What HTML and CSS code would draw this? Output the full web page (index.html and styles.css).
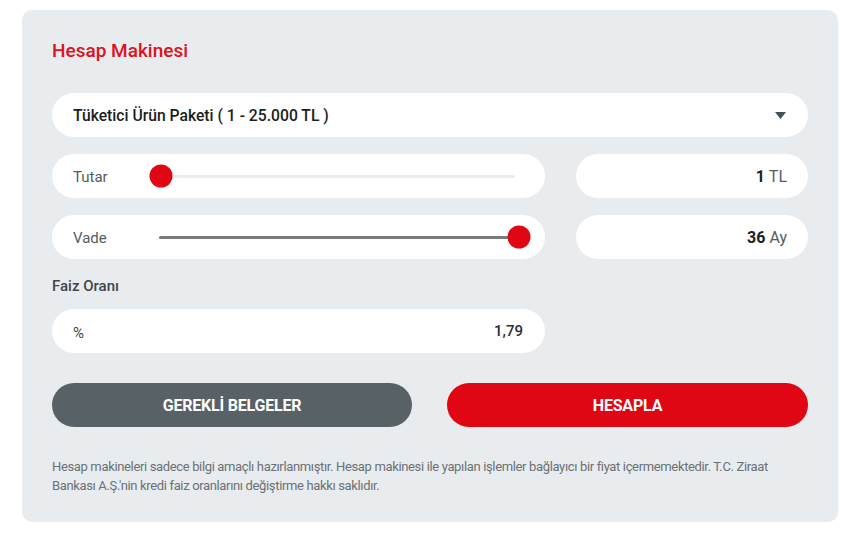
FILE: index.html
```html
<!DOCTYPE html>
<html lang="tr">
<head>
<meta charset="utf-8">
<title>Hesap Makinesi</title>
<link rel="stylesheet" href="styles.css">
</head>
<body>
<div class="card">
  <h2 class="title">Hesap Makinesi</h2>
  <div class="select">
    <span>Tüketici Ürün Paketi ( 1 - 25.000 TL )</span>
    <svg class="caret" width="11" height="7" viewBox="0 0 11 7"><path d="M0 0H11L5.5 7Z" fill="#454f55"/></svg>
  </div>
  <div class="row">
    <div class="field slider-field">
      <span class="label">Tutar</span>
      <div class="track light">
        <span class="thumb start"></span>
      </div>
    </div>
    <div class="field value"><b>1</b>&nbsp;<span>TL</span></div>
  </div>
  <div class="row">
    <div class="field slider-field">
      <span class="label">Vade</span>
      <div class="track dark">
        <span class="thumb end"></span>
      </div>
    </div>
    <div class="field value"><b>36</b>&nbsp;<span>Ay</span></div>
  </div>
  <div class="rate-label">Faiz Oranı</div>
  <div class="row last">
    <div class="field rate"><span class="pct">%</span><span class="num">1,79</span></div>
  </div>
  <div class="buttons">
    <button class="btn gray">GEREKLİ BELGELER</button>
    <button class="btn red">HESAPLA</button>
  </div>
  <p class="note">Hesap makineleri sadece bilgi amaçlı hazırlanmıştır. Hesap makinesi ile yapılan işlemler bağlayıcı bir fiyat içermemektedir. T.C. Ziraat Bankası A.Ş.'nin kredi faiz oranlarını değiştirme hakkı saklıdır.</p>
</div>
</body>
</html>
```

FILE: styles.css
```css
* { box-sizing: border-box; }
html, body { margin: 0; background: #ffffff; }
body {
  padding: 10px 19px 0 22px;
  font-family: Roboto, "Noto Sans", sans-serif;
  color: #1f2326;
}
.card {
  width: 816px;
  height: 512px;
  background: #e8ecee;
  border-radius: 10px;
  padding: 30px 30px 0 30px;
}
.title {
  margin: 0;
  height: 53px;
  font-size: 19px;
  font-weight: 500;
  color: #e0101e;
  line-height: 22px;
}
.select {
  height: 44px;
  background: #fff;
  border-radius: 22px;
  display: flex;
  align-items: center;
  justify-content: space-between;
  padding: 0 22px 0 21px;
  font-size: 15.7px;
  font-weight: 500;
  color: #1b1e20;
  margin-bottom: 17px;
}
.caret { margin-top: 1px; }
.row {
  display: grid;
  grid-template-columns: 493px 232px;
  column-gap: 31px;
  margin-bottom: 17px;
}
.row.last { margin-bottom: 0; }
.field {
  height: 44px;
  background: #fff;
  border-radius: 22px;
  display: flex;
  align-items: center;
}
.slider-field { padding: 0 14px 0 21px; }
.label {
  width: 86px;
  font-size: 15px;
  color: #555c61;
  padding-top: 2px;
}
.track {
  position: relative;
  flex: 1;
  height: 3px;
  border-radius: 2px;
}
.track.light { background: #e8ecee; margin-right: 16px; }
.track.dark { background: #767a7d; margin-right: 12px; }
.thumb {
  position: absolute;
  top: 50%;
  width: 23px;
  height: 23px;
  border-radius: 50%;
  background: #e10613;
  transform: translate(-50%, -50%);
}
.thumb.start { left: 2px; }
.thumb.end { left: 100%; }
.value {
  justify-content: flex-end;
  padding: 0 21px;
  font-size: 16px;
}
.value b { font-weight: 700; color: #1b1e20; }
.value span { color: #555c61; }
.rate-label {
  font-size: 15px;
  font-weight: 500;
  color: #3f464b;
  height: 33px;
  line-height: 20px;
}
.rate {
  justify-content: space-between;
  padding: 0 22px 0 21px;
  font-size: 15px;
  color: #2a2e31;
}
.rate .pct { padding-top: 4px; color: #3f464b; }
.rate .num { font-weight: 500; }
.buttons {
  display: grid;
  grid-template-columns: 360px 361px;
  column-gap: 35px;
  margin-top: 30px;
}
.btn {
  height: 44px;
  border: 0;
  border-radius: 22px;
  color: #fff;
  font-family: Roboto, sans-serif;
  font-weight: 700;
  font-size: 16px;
  letter-spacing: -0.2px;
}
.btn.gray { background: #586166; }
.btn.red { background: #e10613; }
.note {
  margin: 30px 0 0 0;
  font-size: 13px;
  line-height: 19px;
  letter-spacing: -0.35px;
  color: #6b7175;
}
```
